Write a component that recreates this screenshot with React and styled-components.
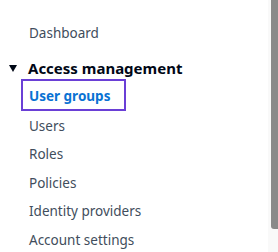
import React from "react";
import styled, { createGlobalStyle } from "styled-components";

const Global = createGlobalStyle`
  html, body { margin: 0; padding: 0; background: #fff; }
  body { font-family: "Noto Sans", "Open Sans", Arial, sans-serif; }
`;

const Page = styled.div`
  display: flex;
  width: 278px;
  height: 252px;
  overflow: hidden;
`;

const Nav = styled.nav`
  flex: 1;
  padding-top: 18px;
`;

const List = styled.ul`
  list-style: none;
  margin: 0;
  padding: 0;
`;

const Item = styled.li`
  height: ${(p) => (p.$active ? "31.5px" : "28.5px")};
  line-height: 28.5px;
  padding-left: ${(p) => (p.$active ? "21px" : "29px")};
`;

const Link = styled.a`
  font-size: 13.5px;
  color: #414d5c;
  text-decoration: none;
  white-space: nowrap;
`;

const ActiveLink = styled(Link)`
  display: inline-block;
  box-sizing: border-box;
  width: 105px;
  height: 32px;
  padding: 1.5px 0 0 6px;
  line-height: 26.5px;
  border: 2px solid #6a3fd6;
  color: #0972d3;
  font-weight: 700;
  vertical-align: top;
`;

const Section = styled.div`
  display: flex;
  align-items: center;
  gap: 11px;
  margin-top: 10.5px;
  height: 22px;
  padding-left: 9px;
  font-size: 15px;
  font-weight: 700;
  color: #000716;
  white-space: nowrap;
`;

const Caret = styled.span`
  width: 0;
  height: 0;
  border-left: 4.5px solid transparent;
  border-right: 4.5px solid transparent;
  border-top: 7px solid #000716;
`;

const Track = styled.div`
  width: 10px;
  background: #f9f9f9;
  display: flex;
  justify-content: flex-end;
`;

const Thumb = styled.div`
  width: 7px;
  height: 229px;
  background: #8a8a8a;
  border-radius: 0 0 0 3px;
`;

export default function App() {
  return (
    <Page>
      <Global />
      <Nav>
        <List>
          <Item><Link>Dashboard</Link></Item>
        </List>
        <Section><Caret />Access management</Section>
        <List>
          <Item $active><ActiveLink>User groups</ActiveLink></Item>
          <Item><Link>Users</Link></Item>
          <Item><Link>Roles</Link></Item>
          <Item><Link>Policies</Link></Item>
          <Item><Link>Identity providers</Link></Item>
          <Item><Link>Account settings</Link></Item>
        </List>
      </Nav>
      <Track><Thumb /></Track>
    </Page>
  );
}
